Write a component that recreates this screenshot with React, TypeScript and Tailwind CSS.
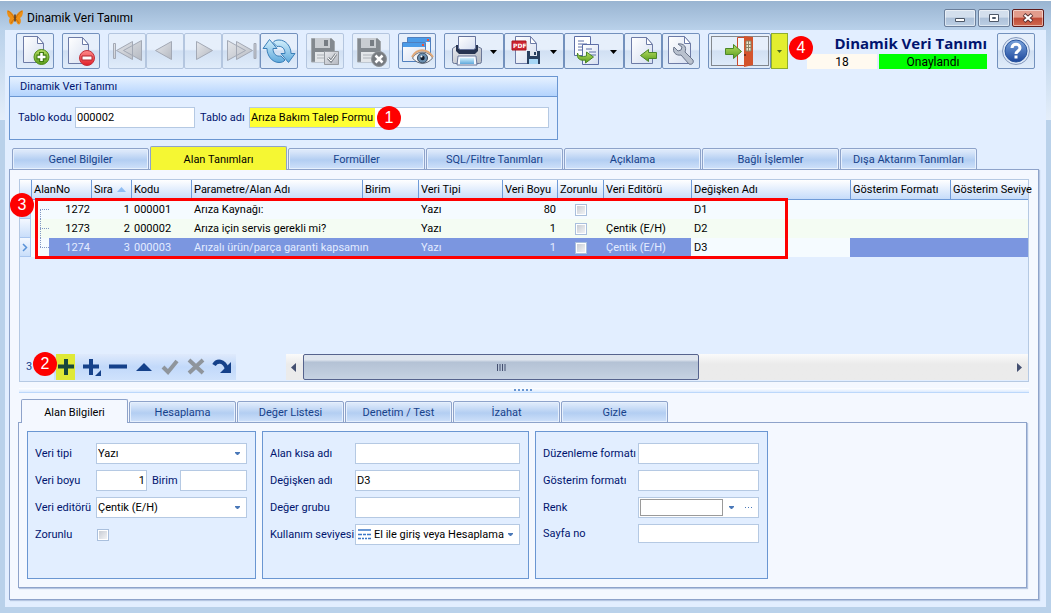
import { useState } from "react";
import type { ReactNode } from "react";
import clsx from "clsx";

function Gradients() {
  return (
    <svg className="absolute h-0 w-0" aria-hidden="true">
      <defs>
        <linearGradient id="page" x1="0" y1="0" x2="1" y2="1">
          <stop offset="0" stopColor="#ffffff" />
          <stop offset="1" stopColor="#d5def0" />
        </linearGradient>
        <linearGradient id="green" x1="0" y1="0" x2="0" y2="1">
          <stop offset="0" stopColor="#b5dc62" />
          <stop offset="1" stopColor="#5a9d1c" />
        </linearGradient>
        <linearGradient id="red" x1="0" y1="0" x2="0" y2="1">
          <stop offset="0" stopColor="#ff8c8c" />
          <stop offset="1" stopColor="#e01c26" />
        </linearGradient>
        <linearGradient id="silver" x1="0" y1="0" x2="1" y2="1">
          <stop offset="0" stopColor="#e6e8ec" />
          <stop offset="1" stopColor="#b4b8c0" />
        </linearGradient>
        <linearGradient id="sky" x1="0" y1="0" x2="0" y2="1">
          <stop offset="0" stopColor="#d3f0fc" />
          <stop offset="1" stopColor="#5fa9dc" />
        </linearGradient>
        <linearGradient id="navy" x1="0" y1="0" x2="0" y2="1">
          <stop offset="0" stopColor="#7ba4dc" />
          <stop offset="1" stopColor="#1c479c" />
        </linearGradient>
      </defs>
    </svg>
  );
}

function Drawing({ width = 36, children }: { width?: number; children: ReactNode }) {
  return (
    <svg width={width} height={34} viewBox={`1 1 ${width} 34`} fill="none" className="block" aria-hidden="true">
      {children}
    </svg>
  );
}

function Page({ x = 7, y = 4, w = 21, h = 27 }: { x?: number; y?: number; w?: number; h?: number }) {
  return (
    <>
      <path
        d={`M${x + 0.5} ${y + 0.5}h${w - 7}l6 7v${h - 8}h-${w - 1}z`}
        fill="url(#page)"
        stroke="#6d7ba6"
      />
      <path d={`M${x + w - 6.5} ${y + 0.5}v7h6z`} fill="#fff" stroke="#6d7ba6" strokeLinejoin="round" />
    </>
  );
}

function Floppy() {
  return (
    <>
      <path d="M5.5 5.500h20l3 3v20.500h-23z" fill="#83898f" stroke="#a3a8ad" />
      <path d="M9 5h15v10H9z" fill="#c9cdd2" />
      <path d="M18 7h4v6h-4z" fill="#777d84" />
      <path d="M9 19h15v10H9z" fill="#e3e6e9" />
      <path d="M11 22h10M11 25h8" stroke="#adb2b8" />
    </>
  );
}

const GreenArrow = ({ d }: { d: string }) => (
  <path d={d} fill="url(#green)" stroke="#4b8728" strokeLinejoin="round" />
);

const icons = {
  add: (
    <Drawing>
      <Page x={7} y={3} />
      <circle cx="25.500" cy="24" r="7.500" fill="url(#green)" stroke="#4f8a18" />
      <path d="M25.500 19v10M20.500 24h10" stroke="#3f7a10" strokeWidth="5" />
      <path d="M25.500 20v8M21.500 24h8" stroke="#fff" strokeWidth="2.500" />
    </Drawing>
  ),
  remove: (
    <Drawing>
      <Page x={6} y={4} />
      <circle cx="25" cy="25" r="7.500" fill="url(#red)" stroke="#c0303a" />
      <path d="M20 23h10v4H20z" fill="#fff" stroke="#b02730" />
    </Drawing>
  ),
  first: (
    <Drawing>
      <path d="M5.500 10.500h2v15h-2zM24.500 8.500v18l-16-9zM33.500 7.500v20l-18-10z" fill="url(#silver)" stroke="#a3a9b5" />
    </Drawing>
  ),
  prev: (
    <Drawing>
      <path d="M25.500 8.500v18l-16-9z" fill="url(#silver)" stroke="#a3a9b5" />
    </Drawing>
  ),
  next: (
    <Drawing>
      <path d="M12.500 8.500v18l16-9z" fill="url(#silver)" stroke="#a3a9b5" />
    </Drawing>
  ),
  last: (
    <Drawing>
      <path d="M32 10.500h2v15h-2zM14.500 8.500v18l16-9zM5.500 7.500v20l18-10z" fill="url(#silver)" stroke="#a3a9b5" />
    </Drawing>
  ),
  refresh: (
    <Drawing>
      <path
        d="M9.500 6.500l-6.500 9h4c0 7 5 14 12 14 3 0 5-1 6-2.500l-4-4c-5 1-8-2.500-8-7.500h4z"
        fill="url(#sky)"
        stroke="#3a7fb8"
        strokeLinejoin="round"
      />
      <path
        d="M28.500 29.500l6.500-9h-4c0-7-5-13.500-12-13.500-3 0-5 1-6 2.500l4 4c5-1 8 2 8 7h-4z"
        fill="url(#sky)"
        stroke="#3a7fb8"
        strokeLinejoin="round"
      />
    </Drawing>
  ),
  save: (
    <Drawing>
      <Floppy />
      <path d="M18.500 18.500h14v13h-14z" fill="url(#silver)" stroke="#969ba1" />
      <path d="M22 25l3 3 5-7" stroke="#858b92" strokeWidth="3" />
      <path d="M22 25l3 3 5-7" stroke="#fff" />
    </Drawing>
  ),
  cancel: (
    <Drawing>
      <Floppy />
      <circle cx="27" cy="26" r="7.500" fill="#777b80" stroke="#8f9499" />
      <path d="M23.500 22.500l7 7m0-7l-7 7" stroke="#fff" strokeWidth="2.500" />
    </Drawing>
  ),
  preview: (
    <Drawing>
      <path d="M9.500 4.500h23v17h-23z" fill="#eaf5ff" stroke="#4f7fbe" />
      <path d="M10 5h22v4H10z" fill="#4c9ce8" />
      <path d="M29 6h2v2h-2z" fill="#ef4f38" />
      <path d="M4.500 9.500h23v19h-23z" fill="url(#page)" stroke="#4f7fbe" />
      <path d="M5 10h22v4H5z" fill="#4c9ce8" />
      <path d="M24 11h2v2h-2z" fill="#ef4f38" />
      <path d="M14.500 25c5-8 15-8 20 0-5 7-15 7-20 0z" fill="#f5f7fa" stroke="#616a78" />
      <path d="M14 24c5-9 15-9 21 0" stroke="#e0a878" strokeWidth="2" />
      <circle cx="24.500" cy="25" r="5" fill="#6b8fb0" stroke="#35475c" />
      <circle cx="24.500" cy="25" r="2.200" fill="#121c2c" />
      <circle cx="23.500" cy="23.500" r="1" fill="#fff" />
    </Drawing>
  ),
  print: (
    <Drawing width={58}>
      <path d="M8.500 15.500l3-2h22l4 2v13q0 2-2 2h-25q-2 0-2-2z" fill="url(#silver)" stroke="#6a7798" strokeLinejoin="round" />
      <path d="M12 12h22v6l-3 3H15l-3-3z" fill="#273450" />
      <path d="M14.500 3.500h17v12l-2 1h-13l-2-1z" fill="url(#page)" stroke="#66749c" />
      <path d="M14 23h18l1 9H13z" fill="#f3f8ff" stroke="#6a7798" />
      <path d="M16 25h14v6H16z" fill="url(#sky)" />
      <path d="M46 17h7l-3.500 4z" fill="#000" />
    </Drawing>
  ),
  pdf: (
    <Drawing width={58}>
      <Page x={11} y={3} w={22} h={28} />
      <path d="M8 8h14v9H8z" fill="#cf2530" stroke="#a8161f" />
      <text x="9" y="15" fontSize="6" fontWeight="bold" fill="#fff" fontFamily="DejaVu Sans">
        PDF
      </text>
      <path d="M23 18h13v13H23z" fill="#29405f" />
      <path d="M26 18h7v5h-7z" fill="#e0e7f0" />
      <path d="M30 19h2v3h-2z" fill="#29405f" />
      <path d="M25 26h9v5h-9z" fill="#a6d6f5" />
      <path d="M46 17h7l-3.500 4z" fill="#000" />
    </Drawing>
  ),
  copy: (
    <Drawing width={58}>
      <path d="M10.500 3.500h16v19h-16z" fill="#fff" stroke="#5d6ea6" />
      <path d="M14 8h6M14 11h9M14 14h9M14 17h6" stroke="#5d6ea6" />
      <path d="M18.500 11.500h16v20h-16z" fill="url(#page)" stroke="#5d6ea6" />
      <path d="M22 16h6M25 19h7M25 22h7" stroke="#5d6ea6" />
      <GreenArrow d="M13.500 20c1 4 5 4 9 3v-4l7 5-8 6v-3c-5 1-9-1-8-7z" />
      <path d="M46 17h7l-3.500 4z" fill="#000" />
    </Drawing>
  ),
  importDoc: (
    <Drawing>
      <Page x={7} y={4} w={22} h={27} />
      <GreenArrow d="M16.500 22.500l8-6v3h8v6h-8v3z" />
    </Drawing>
  ),
  tools: (
    <Drawing>
      <Page x={6} y={3} w={23} h={28} />
      <path
        d="M12 14l4 4 3-1 1-3-4-3c6-1 9 3 7 8l8 8c1 3-1 5-4 4l-8-9c-5 1-9-3-7-8z"
        fill="#b9c1ce"
        stroke="#69748a"
        strokeLinejoin="round"
      />
    </Drawing>
  ),
  exit: (
    <Drawing width={61}>
      <path d="M3.500 3.500h57v29h-57z" stroke="#222" strokeDasharray="1 1" />
      <path d="M29.500 4.500h8v28h-8z" fill="#f2f5fa" stroke="#c9492b" />
      <path d="M36 3l9 1v28l-9 2z" fill="#d4542c" />
      <path d="M38 8h5v10h-5z" fill="#eee4cf" stroke="#8b8263" />
      <path d="M40.500 8v10M38 11.500h5M38 14.500h5" stroke="#8b8263" />
      <path d="M37 21v2" stroke="#7c2f17" strokeWidth="2" />
      <GreenArrow d="M17.500 15.500h8v-4l8 7-8 7v-4h-8z" />
    </Drawing>
  ),
  help: (
    <Drawing>
      <circle cx="19" cy="18" r="13.500" fill="#dde8f7" stroke="#8398bd" />
      <circle cx="19" cy="18" r="11" fill="url(#navy)" stroke="#2b569f" />
      <path d="M15 15c0-5 8-5 8 0 0 3-4 3-4 6" stroke="#fff" strokeWidth="3" />
      <path d="M17.500 22.500h3v3h-3z" fill="#fff" />
    </Drawing>
  ),
};

type IconName = keyof typeof icons;

function ToolButton({ icon, label, disabled }: { icon: IconName; label: string; disabled?: boolean }) {
  return (
    <button
      type="button"
      aria-label={label}
      disabled={disabled}
      className={clsx(
        "h-9 shrink-0 rounded-xs border bg-linear-to-b from-[#e6effb] from-45% via-[#d1e0f3] via-50% to-[#e0ecfa]",
        disabled ? "border-[#b4c6df]" : "border-[#7391bd]",
      )}
    >
      {icons[icon]}
    </button>
  );
}

function Badge({ n, className }: { n: number; className?: string }) {
  return (
    <span
      className={clsx(
        "flex size-6 items-center justify-center rounded-full bg-[#fe0000] font-['Liberation_Sans',sans-serif] text-[16px] leading-none text-white",
        className,
      )}
    >
      {n}
    </span>
  );
}

function Tabs({
  items,
  active,
  onChange,
  label,
  wide,
}: {
  items: string[];
  active: string;
  onChange: (name: string) => void;
  label: string;
  wide?: boolean;
}) {
  return (
    <div role="tablist" aria-label={label} className="relative -mb-px flex h-6 shrink-0 items-end gap-px">
      {items.map((name) => {
        const on = name === active;
        return (
          <button
            key={name}
            type="button"
            role="tab"
            aria-selected={on}
            onClick={() => onChange(name)}
            className={clsx(
              "rounded-t-xs border border-[#8ea3ca] pt-[2px]",
              wide ? "w-[137px]" : "w-[107px]",
              on && "h-6 border-b-0 text-black",
              on && (wide ? "bg-[#f5f733]" : "bg-[#f4f8ff]"),
              !on &&
                "h-[22px] bg-linear-to-b from-[#dbe8fa] from-10% via-[#b3cef2] via-55% to-[#cfe1fa] text-[#17428b] shadow-[inset_0_0_0_1px_#e6f0fd]",
            )}
          >
            {name}
          </button>
        );
      })}
    </div>
  );
}

function Caret({ className }: { className?: string }) {
  return (
    <svg width="5" height="3" viewBox="0 0 5 3" className={clsx("pointer-events-none", className)} aria-hidden="true">
      <path d="M0 0h5v1L3 3H2L0 1z" fill="#4a78b8" />
    </svg>
  );
}

const box = "min-w-0 border border-[#b5c9e3] bg-white text-black outline-none";
const tall = "h-[21px]";
const tick =
  "block size-3 appearance-none border border-[#a9bfdd] bg-[linear-gradient(135deg,#c3c8d0,#f6f7f9)] shadow-[inset_0_0_0_1px_#fff]";

function Field({ id, label, labelWidth, children }: { id: string; label: string; labelWidth: string; children: ReactNode }) {
  return (
    <div className="flex items-center">
      <label htmlFor={id} className={clsx("shrink-0 whitespace-nowrap", labelWidth)}>
        {label}
      </label>
      {children}
    </div>
  );
}

function Choice({ id, value, icon }: { id: string; value: string; icon?: boolean }) {
  return (
    <div className="relative flex flex-1">
      <select id={id} className={clsx(box, tall, "w-full appearance-none", icon ? "pl-[18px]" : "pl-px")}>
        <option>{value}</option>
      </select>
      {icon && (
        <svg width="13" height="11" viewBox="0 0 13 11" className="pointer-events-none absolute top-[5px] left-[3px]" aria-hidden="true">
          <path d="M0 1h13M0 5.500h4m1 0h3m1 0h4M0 9.500h3m1 0h2m1 0h2m1 0h3" stroke="#3c78c8" strokeWidth="1.500" />
        </svg>
      )}
      <Caret className="absolute top-[9px] right-[7px]" />
    </div>
  );
}

const columns = [
  { title: "AlanNo", width: "w-[60px]" },
  { title: "Sıra", width: "w-[40px]", sorted: true },
  { title: "Kodu", width: "w-[60px]" },
  { title: "Parametre/Alan Adı", width: "w-[171px]" },
  { title: "Birim", width: "w-[56px]" },
  { title: "Veri Tipi", width: "w-[84px]" },
  { title: "Veri Boyu", width: "w-[55px]" },
  { title: "Zorunlu", width: "w-[46px]" },
  { title: "Veri Editörü", width: "w-[88px]" },
  { title: "Değişken Adı", width: "w-[159px]" },
  { title: "Gösterim Formatı", width: "w-[100px]" },
  { title: "Gösterim Seviye", width: "" },
];

const rows = [
  { no: "1272", order: 1, code: "000001", name: "Arıza Kaynağı:", size: 80, editor: "", variable: "D1" },
  { no: "1273", order: 2, code: "000002", name: "Arıza için servis gerekli mi?", size: 1, editor: "Çentik (E/H)", variable: "D2" },
  { no: "1274", order: 3, code: "000003", name: "Arızalı ürün/parça garanti kapsamın", size: 1, editor: "Çentik (E/H)", variable: "D3" },
];

function FieldTable() {
  const cell = "whitespace-nowrap p-0 pr-px pl-[3px]";
  return (
    <table className="w-full table-fixed border-separate border-spacing-0 text-black">
      <thead>
        <tr className="h-5">
          <th aria-label="İşaret" className="w-[11px] border-b border-[#6f9bd8] bg-linear-to-b from-white to-[#c6dcfa]" />
          {columns.map((c) => (
            <th
              key={c.title}
              className={clsx(
                "border-b border-l border-[#6f9bd8] bg-linear-to-b from-white to-[#c6dcfa] p-0 pl-[2px] text-left font-normal whitespace-nowrap",
                c.width,
              )}
            >
              {c.title}
              {c.sorted && (
                <svg width="9" height="5" viewBox="0 0 9 5" className="ml-1 inline-block align-middle" aria-hidden="true">
                  <path d="M4.500 0L9 5H0z" fill="#8fbdf3" />
                </svg>
              )}
            </th>
          ))}
        </tr>
      </thead>
      <tbody>
        {rows.map((r, i) => {
          const current = i === 2;
          const plain = i === 1 ? "bg-[#f4fcf3]" : "bg-[#f5fbff]";
          const tone = current ? "bg-[#7b96e0] text-[#e4ecff]" : plain;
          return (
            <tr key={r.no} className="h-[19px]">
              <td className="border-r border-b border-[#a9c6ef] bg-linear-to-b from-[#f4f8ff] to-[#c9defa] p-0">
                {current && (
                  <svg width="6" height="9" viewBox="0 0 6 9" className="mx-auto block" fill="none" aria-hidden="true">
                    <path d="M1 1l3.500 3.500L1 8" stroke="#5a93d8" strokeWidth="1.500" />
                  </svg>
                )}
              </td>
              <td className={clsx("p-0", plain)}>
                <div className="flex h-[19px] items-center">
                  <svg width="18" height="19" viewBox="0 0 18 19" className="shrink-0" fill="none" aria-hidden="true">
                    <path
                      d={current ? "M9.500 0v9M9 9.500h9" : i === 0 ? "M9 9.500h9M9.500 10v9" : "M9.500 0v19M9 9.500h9"}
                      stroke="#8298c4"
                      strokeDasharray="1 1"
                    />
                  </svg>
                  <span className={clsx("flex h-full flex-1 items-center justify-end pr-px", tone)}>{r.no}</span>
                </div>
              </td>
              <td className={clsx(cell, tone, "text-right")}>{r.order}</td>
              <td className={clsx(cell, tone)}>{r.code}</td>
              <td className={clsx(cell, tone, "relative")}>{r.name}</td>
              <td className={clsx(cell, tone)} />
              <td className={clsx(cell, tone)}>Yazı</td>
              <td className={clsx(cell, tone, "text-right")}>{r.size}</td>
              <td className={clsx(cell, tone)}>
                <input type="checkbox" aria-label={`Zorunlu ${r.no}`} className={clsx(tick, "mx-auto")} />
              </td>
              <td className={clsx(cell, tone)}>{r.editor}</td>
              <td className={clsx(cell, plain)}>{r.variable}</td>
              <td className={clsx(cell, tone)} />
              <td className={clsx(cell, tone)} />
            </tr>
          );
        })}
      </tbody>
    </table>
  );
}

const navigator = [
  { label: "Ekle", d: "M3 10.500h16M11 3v16", hot: true },
  { label: "Alt kayıt ekle", d: "M2 10.500h16M10 3v16" },
  { label: "Sil", d: "M2 10.500h18" },
  { label: "Düzenle", fill: "M3 15l8-8 8 8z" },
  { label: "Onayla", d: "M4 11l5 5 9-11", grey: true },
  { label: "Vazgeç", d: "M4 4l14 13M18 4L4 17", grey: true },
  { label: "Yenile", d: "M3 9c3-5 10-5 13 4", fill: "M20 6v11h-11z" },
];

function GridFooter() {
  return (
    <div className="flex h-[27px] shrink-0 items-stretch pb-px">
      <div className="flex w-[266px] shrink-0">
        <span className="w-[34px] self-center pl-[6px] text-[#17428b]">3</span>
        <div className="flex bg-linear-to-b from-[#dfeafc] via-[#c2d9fa] to-[#cfe2fc]">
          {navigator.map((b) => (
            <button
              key={b.label}
              type="button"
              aria-label={b.label}
              className={clsx(
                "flex w-[26px] items-center pl-px",
                b.hot && "bg-[linear-gradient(90deg,transparent_2px,#dfe936_2px,#dfe936_21px,transparent_21px)]",
              )}
            >
              <svg width="22" height="22" viewBox="0 0 22 22" fill="none" aria-hidden="true">
                {b.d && <path d={b.d} stroke={b.grey ? "#8f959c" : b.hot ? "#18483c" : "#15418a"} strokeWidth="4" />}
                {b.fill && <path d={b.fill} fill="#15418a" />}
                {b.label === "Alt kayıt ekle" && <path d="M20 14v6h-6z" fill="#15418a" />}
              </svg>
            </button>
          ))}
        </div>
      </div>
      <div className="flex flex-1 bg-linear-to-b from-[#fafafa] to-[#ebebeb] to-40%">
        <button type="button" aria-label="Sola kaydır" className="flex w-[17px] items-center justify-center pr-[2px]">
          <svg width="5" height="9" viewBox="0 0 5 9" aria-hidden="true">
            <path d="M5 0v9L0 4.500z" fill="#434f70" />
          </svg>
        </button>
        <div className="flex flex-1">
          <div className="flex w-[56%] items-center justify-center rounded-xs border border-[#56638d] bg-linear-to-b from-[#dfe5ee] from-20% via-[#b4c2d5] via-30% to-[#c6d2e2]">
            <svg width="9" height="7" viewBox="0 0 9 7" aria-hidden="true">
              <path d="M.5 0v7M3 0v7M5.500 0v7M8 0v7" stroke="#434f70" />
            </svg>
          </div>
        </div>
        <button type="button" aria-label="Sağa kaydır" className="flex w-[17px] items-center justify-center">
          <svg width="5" height="9" viewBox="0 0 5 9" aria-hidden="true">
            <path d="M0 0v9l5-4.500z" fill="#434f70" />
          </svg>
        </button>
      </div>
    </div>
  );
}

const group = "flex h-[148px] flex-col gap-[6px] border border-[#6a96d2] bg-[#e2eeff] pt-[11px] pr-2 pl-[7px]";

function DetailForm() {
  return (
    <div className="flex items-start gap-[6px] px-2 pt-2 pb-2">
      <div className={clsx(group, "w-[229px]")}>
        <Field id="tip" label="Veri tipi" labelWidth="w-[61px]">
          <Choice id="tip" value="Yazı" />
        </Field>
        <Field id="boy" label="Veri boyu" labelWidth="w-[61px]">
          <input id="boy" defaultValue="1" className={clsx(box, tall, "w-[51px] pr-px text-right")} />
          <label htmlFor="birim" className="w-[33px] shrink-0 pl-[5px]">
            Birim
          </label>
          <input id="birim" className={clsx(box, tall, "flex-1")} />
        </Field>
        <Field id="editor" label="Veri editörü" labelWidth="w-[61px]">
          <Choice id="editor" value="Çentik (E/H)" />
        </Field>
        <Field id="zorunlu" label="Zorunlu" labelWidth="w-[61px]">
          <div className="flex h-[21px] items-center">
            <input id="zorunlu" type="checkbox" className={clsx(tick, "ml-px")} />
          </div>
        </Field>
      </div>
      <div className={clsx(group, "w-[267px]")}>
        <Field id="kisa" label="Alan kısa adı" labelWidth="w-[85px]">
          <input id="kisa" className={clsx(box, tall, "flex-1")} />
        </Field>
        <Field id="degisken" label="Değişken adı" labelWidth="w-[85px]">
          <input id="degisken" defaultValue="D3" className={clsx(box, tall, "flex-1 pl-px")} />
        </Field>
        <Field id="grup" label="Değer grubu" labelWidth="w-[85px]">
          <input id="grup" className={clsx(box, tall, "flex-1")} />
        </Field>
        <Field id="seviye" label="Kullanım seviyesi" labelWidth="w-[85px]">
          <Choice id="seviye" value="El ile giriş veya Hesaplama" icon />
        </Field>
      </div>
      <div className={clsx(group, "w-[233px]")}>
        <Field id="duzen" label="Düzenleme formatı" labelWidth="w-[95px]">
          <input id="duzen" className={clsx(box, tall, "flex-1")} />
        </Field>
        <Field id="gosterim" label="Gösterim formatı" labelWidth="w-[95px]">
          <input id="gosterim" className={clsx(box, tall, "flex-1")} />
        </Field>
        <Field id="renk" label="Renk" labelWidth="w-[95px]">
          <div className={clsx(box, tall, "flex flex-1 items-center p-px")}>
            <input id="renk" className="h-[17px] w-[83px] min-w-0 border border-[#9a9a9a] bg-white" />
            <button type="button" aria-label="Renk seç" className="flex flex-1 justify-center">
              <Caret />
            </button>
            <button type="button" aria-label="Diğer renkler" className="flex flex-1 justify-center">
              <svg width="8" height="2" viewBox="0 0 8 2" aria-hidden="true">
                <path d="M0 0h1v1H0zM3 0h1v1H3zM6 0h1v1H6z" fill="#4a78b8" />
              </svg>
            </button>
          </div>
        </Field>
        <Field id="sayfa" label="Sayfa no" labelWidth="w-[95px]">
          <input id="sayfa" className={clsx(box, "h-[19px] flex-1")} />
        </Field>
      </div>
    </div>
  );
}

function TitleBar() {
  const btn = "flex h-[18px] w-8 items-center justify-center rounded-xs border shadow-[inset_0_0_0_1px_#ffffff80]";
  const light = "border-[#6b7f9b] bg-linear-to-b from-[#d3dfed] from-45% via-[#adc1d9] via-50% to-[#bccfe4]";
  return (
    <header className="flex h-[30px] shrink-0 items-center border-t border-white bg-linear-to-b from-[#99b4d1] to-[#b9d1ea] pr-[7px] pl-[7px]">
      <svg width="16" height="15" viewBox="0 0 16 15" className="mt-1" aria-hidden="true">
        <path d="M7.500 7C6 2.500 2 0 0 .5c0 4 1 6.500 3 7.500-1.500 2-1 6 1 6.500 2 0 3-3.500 3.500-5.500z" fill="#ee8f14" />
        <path d="M8.500 7c1.500-4.500 5.500-7 7.500-6.500 0 4-1 6.500-3 7.500 1.500 2 1 6-1 6.500-2 0-3-3.500-3.500-5.500z" fill="#ee8f14" />
        <path d="M1 1c2 1 5 4 6 7M15 1c-2 1-5 4-6 7M4 13l3-4M12 13L9 9" stroke="#b8650c" strokeWidth=".7" fill="none" />
        <path d="M8 4.500v7" stroke="#5a2f08" strokeWidth="1.500" />
      </svg>
      <h1 className="mt-[5px] ml-1 text-[12px] text-black">Dinamik Veri Tanımı</h1>
      <div className="mt-[5px] ml-auto flex gap-[2px]">
        <button type="button" aria-label="Simge durumuna küçült" className={clsx(btn, light)}>
          <svg width="12" height="10" viewBox="0 0 12 10" aria-hidden="true">
            <path d="M1.500 5.500h9v3h-9z" fill="#fff" stroke="#4d5868" />
          </svg>
        </button>
        <button type="button" aria-label="Ekranı kapla" className={clsx(btn, light)}>
          <svg width="12" height="10" viewBox="0 0 12 10" aria-hidden="true">
            <path d="M1.500 1.500h9v7h-9z" fill="#fff" stroke="#4d5868" />
            <path d="M4.500 4.500h3v1h-3z" fill="#fff" stroke="#4d5868" />
          </svg>
        </button>
        <button type="button" aria-label="Kapat" className={clsx(btn, "border-[#5f1c1c] bg-linear-to-b from-[#e29c8c] from-45% via-[#c04a36] via-50% to-[#cf6a50]")}>
          <svg width="12" height="10" viewBox="0 0 12 10" aria-hidden="true">
            <path d="M2 1.500l8 7M10 1.500l-8 7" stroke="#5a3030" strokeWidth="4" />
            <path d="M2.500 2l7 6M9.500 2l-7 6" stroke="#fff" strokeWidth="2.200" />
          </svg>
        </button>
      </div>
    </header>
  );
}

function Toolbar() {
  return (
    <div className="flex items-center gap-2 px-[11px] pt-[3px]">
      <ToolButton icon="add" label="Yeni" />
      <ToolButton icon="remove" label="Sil" />
      <div className="flex">
        <ToolButton icon="first" label="İlk kayıt" disabled />
        <ToolButton icon="prev" label="Önceki kayıt" disabled />
        <ToolButton icon="next" label="Sonraki kayıt" disabled />
        <ToolButton icon="last" label="Son kayıt" disabled />
        <ToolButton icon="refresh" label="Yenile" />
      </div>
      <ToolButton icon="save" label="Kaydet" disabled />
      <ToolButton icon="cancel" label="Vazgeç" disabled />
      <ToolButton icon="preview" label="Önizleme" />
      <div className="flex">
        <ToolButton icon="print" label="Yazdır" />
        <ToolButton icon="pdf" label="PDF olarak kaydet" />
        <ToolButton icon="copy" label="Kopyala" />
        <ToolButton icon="importDoc" label="İçeri al" />
        <ToolButton icon="tools" label="Araçlar" />
      </div>
      <div className="relative flex shrink-0">
        <ToolButton icon="exit" label="Çıkış" />
        <button type="button" aria-label="Çıkış seçenekleri" className="flex h-9 w-[17px] items-center justify-center border border-[#8fae2e] bg-[#e3ee2f]">
          <svg width="5" height="3" viewBox="0 0 5 3" aria-hidden="true">
            <path d="M0 0h5L2.500 3z" fill="#4d6b1e" />
          </svg>
        </button>
        <Badge n={4} className="absolute top-[3px] left-[81px]" />
      </div>
      <div className="mr-[2px] ml-auto flex w-[180px] shrink-0 flex-col self-stretch">
        <h2 className="flex h-[21px] items-center justify-end font-['Open_Sans','Noto_Sans',sans-serif] text-[15px] leading-none font-bold whitespace-nowrap text-[#00146e]">
          Dinamik Veri Tanımı
        </h2>
        <div className="flex h-[15px] gap-[2px] text-center text-[12px] leading-[16px] text-black">
          <span className="w-[70px] bg-[#fffaf0]">18</span>
          <span className="flex-1 bg-[#00ff00]">Onaylandı</span>
        </div>
      </div>
      <ToolButton icon="help" label="Yardım" />
    </div>
  );
}

export default function App() {
  const [tab, setTab] = useState("Alan Tanımları");
  const [sub, setSub] = useState("Alan Bilgileri");
  return (
    <div className="flex min-h-screen flex-col bg-[#b9d1ea] font-[Roboto,'Noto_Sans',sans-serif] text-[11px] leading-[14px] text-[#00146e]">
      <Gradients />
      <TitleBar />
      <div className="flex flex-1 flex-col bg-[linear-gradient(180deg,#b9d1ea,#e4eefa_90px,#b9d1ea_90px)] px-[5px] pb-[6px]">
        <main className="flex flex-1 flex-col bg-[#e2eeff]">
          <Toolbar />
          <section className="mt-[7px] ml-1 h-16 w-[549px] border border-[#6a96d2]">
            <h3 className="h-5 border-b border-[#6a96d2] bg-linear-to-b from-[#e6f1ff] to-[#b3d3fd] pl-[10px] leading-[19px]">Dinamik Veri Tanımı</h3>
            <div className="flex items-center pt-[10px] pr-2 pl-2">
              <label htmlFor="kod" className="w-[57px] shrink-0">
                Tablo kodu
              </label>
              <input id="kod" defaultValue="000002" className={clsx(box, tall, "w-[120px] pl-px")} />
              <label htmlFor="ad" className="w-[54px] shrink-0 pl-[5px]">
                Tablo adı
              </label>
              <div className="relative flex flex-1">
                <input
                  id="ad"
                  defaultValue="Arıza Bakım Talep Formu"
                  className={clsx(box, tall, "w-full bg-[linear-gradient(90deg,#ffff33_125px,#ffffff_125px)] pl-px")}
                />
                <Badge n={1} className="absolute -top-px left-[128px]" />
              </div>
            </div>
          </section>

          <section className="mt-[6px] mr-[7px] mb-[7px] ml-1 flex flex-1 flex-col">
            <div className="pl-[3px]">
              <Tabs
                wide
                label="Tanım sayfaları"
                items={["Genel Bilgiler", "Alan Tanımları", "Formüller", "SQL/Filtre Tanımları", "Açıklama", "Bağlı İşlemler", "Dışa Aktarım Tanımları"]}
                active={tab}
                onChange={setTab}
              />
            </div>
            <div className="flex flex-1 flex-col border border-[#8ea3ca] bg-[#f4f8ff] px-[9px] pt-[9px] pb-[11px] shadow-[1px_1px_1px_#b5c6e2]">
              <div className="relative flex min-h-[203px] flex-1 flex-col border border-[#b5c9e3] bg-[#e2eeff]">
                <FieldTable />
                <div className="flex-1" />
                <GridFooter />
                <div className="pointer-events-none absolute top-[18px] left-[15px] h-[61px] w-[753px] border-3 border-[#fe0000]" />
                <Badge n={3} className="absolute top-[13px] -left-[10px]" />
                <Badge n={2} className="absolute bottom-[5px] left-[13px]" />
              </div>
              <div className="mt-[6px] mb-[6px] flex h-[5px] items-end justify-center border-b border-[#bcd8fb] bg-linear-to-b from-white to-[#dcebff]">
                <svg width="20" height="3" viewBox="0 0 20 3" aria-hidden="true">
                  <path d="M0 1h2m2 0h2m2 0h2m2 0h2m2 0h2" stroke="#6a96d2" strokeWidth="2" />
                </svg>
              </div>
              <div className="pl-[2px]">
                <Tabs
                  label="Alan sayfaları"
                  items={["Alan Bilgileri", "Hesaplama", "Değer Listesi", "Denetim / Test", "İzahat", "Gizle"]}
                  active={sub}
                  onChange={setSub}
                />
              </div>
              <div className="mr-[2px] -ml-px border border-[#8ea3ca] shadow-[1px_1px_1px_#b5c6e2]">
                <DetailForm />
              </div>
            </div>
          </section>
        </main>
      </div>
    </div>
  );
}
